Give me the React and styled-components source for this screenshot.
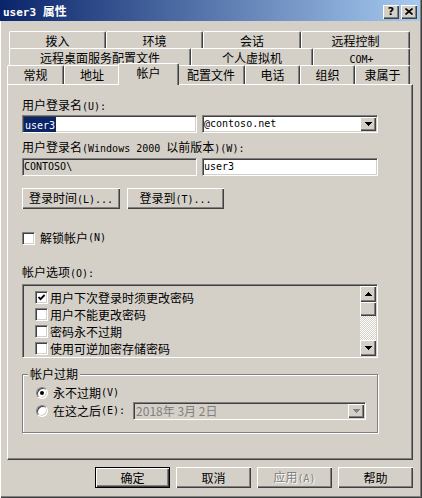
import React from "react";
import styled, { createGlobalStyle, css } from "styled-components";

const GlobalStyle = createGlobalStyle`
  html, body { margin: 0; padding: 0; background: #d4d0c8; }
  body {
    font-family: "Noto Sans CJK SC", "DejaVu Sans", sans-serif;
    font-size: 12px;
    line-height: 14px;
    color: #000;
  }
  * { box-sizing: border-box; }
`;

// classic 3D edges
const raised = css`
  background: #d4d0c8;
  box-shadow: inset 1px 1px #fff, inset -1px -1px #404040, inset -2px -2px #808080;
`;

const sunken = css`
  border: 1px solid;
  border-color: #808080 #fff #fff #808080;
  box-shadow: inset 1px 1px #404040, inset -1px -1px #d4d0c8;
`;

const Lat = styled.span`
  font-family: "DejaVu Sans Mono", "Liberation Mono", monospace;
  font-size: ${p => p.$size || 10}px;
`;

const Window = styled.div`
  width: 422px;
  height: 498px;
  background: #d4d0c8;
  display: flex;
  flex-direction: column;
  box-shadow: inset 1px 0 #fff, inset -1px -1px #404040, inset -2px -2px #808080;
`;

const TitleBar = styled.div`
  height: 21px;
  margin-right: 2px;
  padding: 2px 3px 0 3px;
  display: flex;
  align-items: center;
  background: linear-gradient(to right, #0a246a, #a6caf0);
  color: #fff;
  font-weight: bold;
`;

const TitleText = styled.div`
  flex: 1;
  white-space: nowrap;
`;

const CapButtons = styled.div`
  display: flex;
  gap: 2px;
`;

const CapButton = styled.div`
  ${raised}
  width: 16px;
  height: 14px;
  display: flex;
  align-items: center;
  justify-content: center;
  color: #000;
  font-family: "DejaVu Sans", sans-serif;
  font-size: 11px;
  font-weight: bold;
  line-height: 14px;
`;

const TabStrip = styled.div`
  margin-top: 10px;
  padding-left: 7px;
  display: flex;
  flex-direction: column;
`;

const TabRow = styled.div`
  display: flex;
  height: ${p => p.$h}px;
  padding-left: ${p => p.$indent}px;
`;

const Tab = styled.div`
  flex: none;
  width: ${p => p.$w}px;
  height: 100%;
  padding-top: 3px;
  line-height: 12px;
  text-align: center;
  white-space: nowrap;
  background: #d4d0c8;
  border-top: 1px solid #fff;
  border-left: 1px solid #fff;
  border-right: 1px solid #404040;
  border-radius: 2px 2px 0 0;
  box-shadow: inset -1px 0 #808080;
  ${p => p.$active && css`
    position: relative;
    z-index: 2;
    width: ${p.$w + 4}px;
    height: calc(100% + 3px);
    margin: -2px -2px 0;
  `}
`;

const Panel = styled.div`
  position: relative;
  margin-left: 7px;
  width: 406px;
  height: 376px;
  padding: 13px 0 0 14px;
  border-top: 1px solid #fff;
  border-left: 1px solid #fff;
  border-right: 1px solid #404040;
  border-bottom: 1px solid #404040;
  box-shadow: inset -1px -1px #808080;
`;

const Label = styled.div`
  margin-top: ${p => p.$mt || 0}px;
  white-space: nowrap;
`;

const FieldRow = styled.div`
  display: flex;
  gap: 5px;
  margin-top: ${p => p.$mt}px;
`;

const Field = styled.div`
  ${sunken}
  width: ${p => p.$w}px;
  height: 18px;
  padding: 0 1px;
  display: flex;
  align-items: center;
  white-space: nowrap;
  background: ${p => (p.$readonly ? "#d4d0c8" : "#fff")};
  color: ${p => (p.$disabled ? "#808080" : "#000")};
`;

const DatePick = styled(Field)`
  margin-left: 8px;
  padding-left: 2px;
`;

const Selected = styled.span`
  background: #0a246a;
  color: #fff;
  line-height: 13px;
  padding: 0 1px;
`;

const DropButton = styled.div`
  ${raised}
  margin-left: auto;
  width: 16px;
  height: 14px;
  display: flex;
  align-items: center;
  justify-content: center;
`;

const ButtonRow = styled.div`
  display: flex;
  gap: 7px;
  margin-top: 12px;
`;

const Button = styled.button`
  ${raised}
  width: ${p => p.$w}px;
  height: 21px;
  padding: 0;
  border: ${p => (p.$default ? "1px solid #000" : "none")};
  font: inherit;
  line-height: 14px;
  white-space: nowrap;
  color: ${p => (p.disabled ? "#808080" : "#000")};
  text-shadow: ${p => (p.disabled ? "1px 1px #fff" : "none")};
`;

const CheckRow = styled.div`
  display: flex;
  align-items: center;
  height: ${p => p.$h || 14}px;
  margin-top: ${p => p.$mt || 0}px;
  white-space: nowrap;
`;

const Box = styled.span`
  ${sunken}
  flex: none;
  width: 13px;
  height: 13px;
  margin-right: ${p => p.$gap}px;
  background: #fff;
  display: flex;
  align-items: center;
  justify-content: center;
`;

const ListBox = styled.div`
  ${sunken}
  margin-top: 3px;
  width: 356px;
  height: 74px;
  padding: 1px;
  display: flex;
  background: #d4d0c8;
`;

const ListItems = styled.div`
  flex: 1;
  padding: 3px 0 0 11px;
`;

const ScrollBar = styled.div`
  width: 16px;
  display: flex;
  flex-direction: column;
`;

const ScrollButton = styled.div`
  ${raised}
  height: ${p => p.$h}px;
  display: flex;
  align-items: center;
  justify-content: center;
`;

const Track = styled.div`
  flex: 1;
  background: repeating-conic-gradient(#d4d0c8 0 25%, #fff 0 50%) 0 0 / 2px 2px;
`;

const Group = styled.div`
  position: relative;
  margin-top: 16px;
  width: 356px;
  height: 59px;
  padding: 11px 0 0 13px;
  border: 1px solid #808080;
  box-shadow: inset 1px 1px #fff, 1px 1px #fff;
`;

const Legend = styled.span`
  position: absolute;
  top: -8px;
  left: 5px;
  padding: 0 2px;
  background: #d4d0c8;
`;

const RadioRow = styled.div`
  display: flex;
  align-items: center;
  height: ${p => p.$h}px;
  margin-top: ${p => p.$mt || 0}px;
  white-space: nowrap;
`;

const Radio = styled.span`
  flex: none;
  width: 12px;
  height: 12px;
  margin-right: 5px;
  border-radius: 50%;
  border: 1px solid;
  border-color: #808080 #fff #fff #808080;
  box-shadow: inset 1px 1px #404040, inset -1px -1px #d4d0c8;
  background: #fff;
  display: flex;
  align-items: center;
  justify-content: center;
  &::after {
    content: "";
    width: 4px;
    height: 4px;
    border-radius: 50%;
    background: ${p => (p.$on ? "#000" : "transparent")};
  }
`;

const Footer = styled.div`
  display: flex;
  justify-content: flex-end;
  gap: 6px;
  margin-top: 7px;
  padding-right: 9px;
`;

const Arrow = ({ down, color = "#000" }) => (
  <svg width="7" height="4" viewBox="0 0 7 4" shapeRendering="crispEdges">
    <polygon points={down ? "0,0 7,0 3.5,4" : "3.5,0 7,4 0,4"} fill={color} />
  </svg>
);

const Check = () => (
  <svg width="9" height="9" viewBox="0 0 9 9">
    <path d="M1.5 4 L3.5 6.2 L7.6 2" stroke="#000" strokeWidth="1.8" fill="none" />
  </svg>
);

const CloseGlyph = () => (
  <svg width="8" height="7" viewBox="0 0 8 7">
    <path d="M0.5 0.5 L7.5 6.5 M7.5 0.5 L0.5 6.5" stroke="#000" strokeWidth="1.6" />
  </svg>
);

const rows = [
  { h: 17, indent: 2, tabs: [["拨入", 97], ["环境", 97], ["会话", 98], ["远程控制", 109]] },
  { h: 17, indent: 2, tabs: [["远程桌面服务配置文件", 182], ["个人虚拟机", 122], [<Lat key="c">COM+</Lat>, 97]] },
  {
    h: 19,
    indent: 0,
    tabs: [["常规", 57], ["地址", 56], ["帐户", 57, true], ["配置文件", 68], ["电话", 55], ["组织", 55], ["隶属于", 55]],
  },
];

const options = [
  ["用户下次登录时须更改密码", true],
  ["用户不能更改密码", false],
  ["密码永不过期", false],
  ["使用可逆加密存储密码", false],
];

export default function App() {
  return (
    <>
      <GlobalStyle />
      <Window>
        <TitleBar>
          <TitleText>
            <Lat $size={11}>user3 </Lat>属性
          </TitleText>
          <CapButtons>
            <CapButton>?</CapButton>
            <CapButton>
              <CloseGlyph />
            </CapButton>
          </CapButtons>
        </TitleBar>

        <TabStrip>
          {rows.map((row, i) => (
            <TabRow key={i} $h={row.h} $indent={row.indent}>
              {row.tabs.map(([label, w, active], j) => (
                <Tab key={j} $w={w} $active={active}>
                  {label}
                </Tab>
              ))}
            </TabRow>
          ))}
        </TabStrip>

        <Panel>
          <Label>
            用户登录名<Lat>(U):</Lat>
          </Label>
          <FieldRow $mt={1}>
            <Field $w={175}>
              <Selected>
                <Lat>user3</Lat>
              </Selected>
            </Field>
            <Field $w={176}>
              <Lat>@contoso.net</Lat>
              <DropButton>
                <Arrow down />
              </DropButton>
            </Field>
          </FieldRow>

          <Label $mt={7}>
            用户登录名<Lat>(Windows 2000 </Lat>以前版本<Lat>)(W):</Lat>
          </Label>
          <FieldRow $mt={2}>
            <Field $w={175} $readonly>
              <Lat>CONTOSO\</Lat>
            </Field>
            <Field $w={176}>
              <Lat>user3</Lat>
            </Field>
          </FieldRow>

          <ButtonRow>
            <Button $w={98}>
              登录时间<Lat>(L)...</Lat>
            </Button>
            <Button $w={97}>
              登录到<Lat>(T)...</Lat>
            </Button>
          </ButtonRow>

          <CheckRow $mt={22}>
            <Box $gap={5} />
            解锁帐户<Lat>(N)</Lat>
          </CheckRow>

          <Label $mt={20}>
            帐户选项<Lat>(O):</Lat>
          </Label>
          <ListBox>
            <ListItems>
              {options.map(([text, on]) => (
                <CheckRow key={text} $h={17}>
                  <Box $gap={2}>{on && <Check />}</Box>
                  {text}
                </CheckRow>
              ))}
            </ListItems>
            <ScrollBar>
              <ScrollButton $h={16}>
                <Arrow />
              </ScrollButton>
              <ScrollButton $h={14} />
              <Track />
              <ScrollButton $h={16}>
                <Arrow down />
              </ScrollButton>
            </ScrollBar>
          </ListBox>

          <Group>
            <Legend>帐户过期</Legend>
            <RadioRow $h={14}>
              <Radio $on />
              永不过期<Lat>(V)</Lat>
            </RadioRow>
            <RadioRow $h={18} $mt={2}>
              <Radio />
              在这之后<Lat>(E):</Lat>
              <DatePick $w={233} $readonly $disabled>
                2018年 3月 2日
                <DropButton>
                  <Arrow down color="#808080" />
                </DropButton>
              </DatePick>
            </RadioRow>
          </Group>
        </Panel>

        <Footer>
          <Button $w={75} $default>确定</Button>
          <Button $w={75}>取消</Button>
          <Button $w={75} disabled>
            应用<Lat>(A)</Lat>
          </Button>
          <Button $w={75}>帮助</Button>
        </Footer>
      </Window>
    </>
  );
}
